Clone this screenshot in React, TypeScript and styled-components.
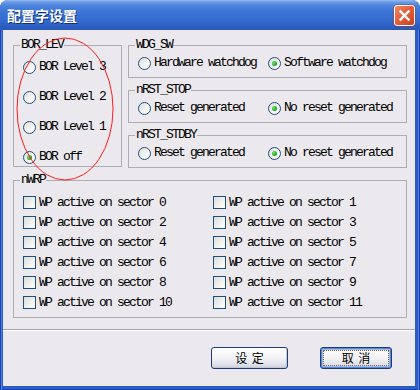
import React from 'react'
import styled, { createGlobalStyle } from 'styled-components'

const GlobalStyle = createGlobalStyle`
  html, body {
    margin: 0;
    padding: 0;
    background: #ffffff;
  }
  body {
    font-family: 'Liberation Mono', 'DejaVu Sans Mono', monospace;
  }
`

const Window = styled.div`
  width: 420px;
  height: 390px;
  display: flex;
  flex-direction: column;
  border-radius: 8px 8px 0 0;
  overflow: hidden;
  background: #2b5bc8;
`

const TitleBar = styled.div`
  height: 30px;
  flex: none;
  display: flex;
  align-items: center;
  justify-content: space-between;
  padding: 0 5px 0 7px;
  box-sizing: border-box;
  background: linear-gradient(
    to bottom,
    #9bbcf2 0px,
    #6a9be6 2px,
    #4a82dc 6px,
    #3b74d6 12px,
    #356ccf 20px,
    #2b5cc0 27px,
    #2a58bc 30px
  );
`

const Title = styled.span`
  font-family: 'Noto Sans CJK SC', sans-serif;
  font-size: 14px;
  font-weight: 700;
  color: #ffffff;
  text-shadow: 1px 1px 0 #12307e;
`

const CloseButton = styled.div`
  width: 21px;
  height: 21px;
  box-sizing: border-box;
  border: 1px solid #ffffff;
  border-radius: 3px;
  display: flex;
  align-items: center;
  justify-content: center;
  background: linear-gradient(135deg, #f08a68 0%, #e2603c 45%, #c8431f 100%);
  box-shadow: 0 0 0 0.5px #a93a1e;
`

const Frame = styled.div`
  flex: 1;
  display: flex;
  padding: 0 5px 4px 3px;
  background: #2c5cc9;
  box-shadow: inset 1px 0 0 #1a44a8, inset 2px 0 0 #4d7fe6, inset -1px 0 0 #1a44a8,
    inset -2px 0 0 #4d7fe6, inset 0 -1px 0 #1a44a8;
`

const Client = styled.div`
  flex: 1;
  position: relative;
  display: flex;
  flex-direction: column;
  background: #ebe9ed;
`

const Body = styled.div`
  padding: 9px 8px 0 10px;
  display: flex;
  flex-direction: column;
  gap: 6px;
`

const TopRow = styled.div`
  display: flex;
  align-items: flex-start;
  gap: 6px;
`

const RightColumn = styled.div`
  flex: 1;
  display: flex;
  flex-direction: column;
  gap: 6px;
`

interface GroupProps {
  $pad: string
  $width?: string
}

const Group = styled.fieldset<GroupProps>`
  margin: 0;
  min-inline-size: 0;
  box-sizing: border-box;
  width: ${(p) => p.$width || 'auto'};
  border: 1px solid #aeacb4;
  border-radius: 0;
  padding: ${(p) => p.$pad};
`

const Legend = styled.legend`
  margin-left: -3px;
  padding: 0 1px;
  font-family: 'Liberation Mono', 'DejaVu Sans Mono', monospace;
  font-size: 13px;
  line-height: 12px;
  letter-spacing: -1.8px;
  color: #000000;
`

const Stack = styled.div`
  display: flex;
  flex-direction: column;
  gap: 16px;
`

const OptionGrid = styled.div`
  display: grid;
  grid-template-columns: 130px 1fr;
`

const CheckGrid = styled.div`
  display: grid;
  grid-template-columns: 190px 1fr;
  row-gap: 7px;
`

const Option = styled.label<{ $h: number }>`
  display: flex;
  align-items: center;
  gap: 3px;
  height: ${(p) => p.$h}px;
  font-family: 'Liberation Mono', 'DejaVu Sans Mono', monospace;
  font-size: 13px;
  line-height: 12px;
  letter-spacing: -1.8px;
  color: #000000;
  white-space: pre;
`

const RadioDot = styled.span<{ $checked: boolean }>`
  width: 13px;
  height: 13px;
  flex: none;
  box-sizing: border-box;
  border-radius: 50%;
  border: 1px solid #1c5180;
  background: linear-gradient(135deg, #dcdcd7 0%, #f4f4f2 55%, #ffffff 100%);
  display: flex;
  align-items: center;
  justify-content: center;
  &::after {
    content: '';
    display: ${(p) => (p.$checked ? 'block' : 'none')};
    width: 5px;
    height: 5px;
    border-radius: 50%;
    background: radial-gradient(circle at 35% 35%, #6fe36b 0%, #2bb02a 55%, #1a8a1a 100%);
  }
`

const CheckBox = styled.span`
  width: 13px;
  height: 13px;
  flex: none;
  box-sizing: border-box;
  border: 1px solid #1c5180;
  background: linear-gradient(135deg, #dcdcd7 0%, #f2f2ef 60%, #ffffff 100%);
`

const Separator = styled.div`
  margin-top: 11px;
  border-top: 1px solid #a6a5ab;
  border-bottom: 1px solid #ffffff;
`

const ButtonBar = styled.div`
  display: flex;
  justify-content: flex-end;
  gap: 32px;
  padding: 16px 23px 0 0;
`

const Button = styled.button<{ $width: number; $isDefault?: boolean }>`
  position: relative;
  width: ${(p) => p.$width}px;
  height: 22px;
  padding: 0;
  box-sizing: border-box;
  border: 1px solid #1e3d75;
  border-radius: 3px;
  font-family: 'Noto Sans CJK SC', sans-serif;
  font-size: 12px;
  line-height: 12px;
  word-spacing: 2px;
  white-space: pre;
  color: #000000;
  background: linear-gradient(to bottom, #ffffff 0%, #f4f4f7 45%, #e2e4ec 80%, #c9cedb 100%);
  box-shadow: ${(p) =>
    p.$isDefault
      ? 'inset 0 0 0 1px #5a86dc, inset 0 0 0 2px #9dbbef'
      : 'inset -1px -1px 0 #c2c7d4'};
  &::after {
    content: '';
    display: ${(p) => (p.$isDefault ? 'block' : 'none')};
    position: absolute;
    inset: 2px;
    border: 1px dotted #8a6a3a;
  }
`

const Annotation = styled.svg`
  position: absolute;
  left: 0;
  top: 0;
  width: 100%;
  height: 100%;
  pointer-events: none;
`

const borLevels = [
  { label: 'BOR Level 3', checked: false },
  { label: 'BOR Level 2', checked: false },
  { label: 'BOR Level 1', checked: false },
  { label: 'BOR off', checked: true },
]

const pairGroups = [
  { title: 'WDG_SW', options: ['Hardware watchdog', 'Software watchdog'] },
  { title: 'nRST_STOP', options: ['Reset generated', 'No reset generated'] },
  { title: 'nRST_STDBY', options: ['Reset generated', 'No reset generated'] },
]

const sectors = Array.from({ length: 12 }, (_, i) => i)

function CloseIcon(): JSX.Element {
  return (
    <svg width="13" height="13" viewBox="0 0 13 13">
      <path d="M2.5 2.5 L10.5 10.5 M10.5 2.5 L2.5 10.5" stroke="#ffffff" strokeWidth="2.4" strokeLinecap="square" />
    </svg>
  )
}

export default function App(): JSX.Element {
  return (
    <>
      <GlobalStyle />
      <Window>
        <TitleBar>
          <Title>配置字设置</Title>
          <CloseButton>
            <CloseIcon />
          </CloseButton>
        </TitleBar>
        <Frame>
          <Client>
            <Body>
              <TopRow>
                <Group $width="109px" $pad="9px 9px 2px">
                  <Legend>BOR_LEV</Legend>
                  <Stack>
                    {borLevels.map((b) => (
                      <Option key={b.label} $h={14}>
                        <RadioDot $checked={b.checked} />
                        {b.label}
                      </Option>
                    ))}
                  </Stack>
                </Group>
                <RightColumn>
                  {pairGroups.map((g) => (
                    <Group key={g.title} $pad="5px 9px 7px">
                      <Legend>{g.title}</Legend>
                      <OptionGrid>
                        {g.options.map((o, i) => (
                          <Option key={o} $h={14}>
                            <RadioDot $checked={i === 1} />
                            {o}
                          </Option>
                        ))}
                      </OptionGrid>
                    </Group>
                  ))}
                </RightColumn>
              </TopRow>
              <Group $pad="10px 9px 8px">
                <Legend>nWRP</Legend>
                <CheckGrid>
                  {sectors.map((s) => (
                    <Option key={s} $h={13}>
                      <CheckBox />
                      {`WP active on sector ${s}`}
                    </Option>
                  ))}
                </CheckGrid>
              </Group>
            </Body>
            <Separator />
            <ButtonBar>
              <Button $width={77}>设 定</Button>
              <Button $width={72} $isDefault>
                取 消
              </Button>
            </ButtonBar>
            <Annotation>
              <ellipse cx="62" cy="79" rx="48" ry="71" fill="none" stroke="#ff1a1a" strokeWidth="1" />
            </Annotation>
          </Client>
        </Frame>
      </Window>
    </>
  )
}
